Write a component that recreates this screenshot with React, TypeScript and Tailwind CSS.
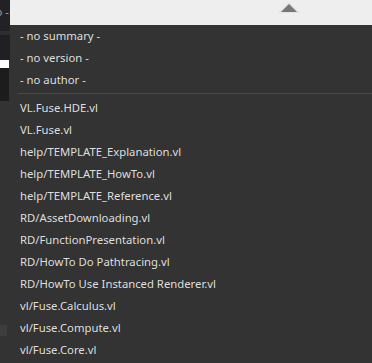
import React from "react";

const meta = ["- no summary -", "- no version -", "- no author -"];
const files = [
  "VL.Fuse.HDE.vl",
  "VL.Fuse.vl",
  "help/TEMPLATE_Explanation.vl",
  "help/TEMPLATE_HowTo.vl",
  "help/TEMPLATE_Reference.vl",
  "RD/AssetDownloading.vl",
  "RD/FunctionPresentation.vl",
  "RD/HowTo Do Pathtracing.vl",
  "RD/HowTo Use Instanced Renderer.vl",
  "vl/Fuse.Calculus.vl",
  "vl/Fuse.Compute.vl",
  "vl/Fuse.Core.vl",
];

export default function App() {
  return (
    <div
      className="flex w-[372px] h-[363px] overflow-hidden bg-[#333333]"
      style={{ fontFamily: '"Noto Sans", "Open Sans", sans-serif' }}
    >
      <div className="flex flex-col w-[10px] shrink-0">
        <div className="h-[31px] bg-[#222226] flex items-start pt-[6px] justify-end overflow-hidden">
          <span className="whitespace-nowrap text-[11.3px] text-[#a0a0a0] pr-[1px] leading-none">o -</span>
        </div>
        <div className="h-[4px] bg-[#2e2e32]" />
        <div className="h-[25px] bg-[#1f1f24]" />
        <div className="h-[8px] w-[9px] bg-white" />
        <div className="h-[33px] w-[9px] bg-[#1c1c1c]" />
        <div className="h-[224px]" />
        <div className="h-[11px] w-[7px] bg-[#3d3d3d]" />
      </div>
      <div className="flex-1 flex flex-col">
        <div className="h-[25px] bg-[#eeeeee] pl-[268px] pt-[2px]">
          <svg width="22" height="11" viewBox="0 0 22 11">
            <polygon points="11,0 22,11 0,11" fill="#e2e2e2" />
            <polygon points="11,2 19,10 3,10" fill="#777777" />
          </svg>
        </div>
        <div className="flex flex-col text-[11.3px] text-[#dedede]">
          {meta.map((m) => (
            <div key={m} className="h-[22px] flex items-center pl-[10px]">
              {m}
            </div>
          ))}
          <div className="pt-[2px] pb-[3px] pl-[8px]">
            <div className="h-[1px] bg-[#4a4a4a]" />
          </div>
          {files.map((f) => (
            <div key={f} className="h-[22px] flex items-center pl-[10px] whitespace-nowrap">
              {f}
            </div>
          ))}
        </div>
      </div>
    </div>
  );
}
